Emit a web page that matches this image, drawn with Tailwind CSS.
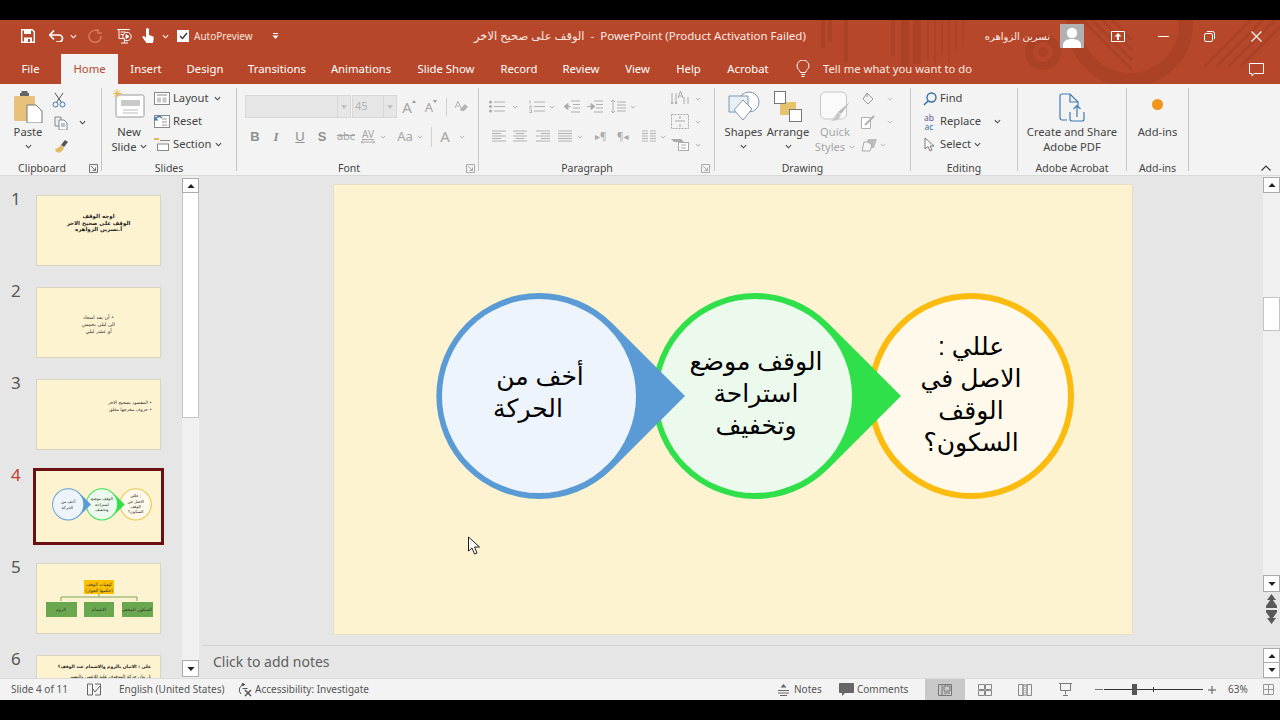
<!DOCTYPE html>
<html lang="en">
<head>
<meta charset="UTF-8">
<title>PowerPoint</title>
<script src="https://cdn.jsdelivr.net/npm/@tailwindcss/browser@4"></script>
</head>
<body class="bg-black overflow-hidden">
<svg class="hidden">
  <symbol id="chev" viewBox="0 0 8 5"><path d="M1 1l3 3 3-3" fill="none" stroke="currentColor" stroke-width="1.2"/></symbol>
  <symbol id="up" viewBox="0 0 9 5"><path d="M4.5 0L9 5H0z" fill="currentColor"/></symbol>
  <symbol id="down" viewBox="0 0 9 5"><path d="M0 0h9L4.5 5z" fill="currentColor"/></symbol>
  <symbol id="launch" viewBox="0 0 9 9"><path d="M.5.5h8v8h-8z" fill="none" stroke="currentColor"/><path d="M2 2l4.5 4.5M6.5 3.5v3h-3" fill="none" stroke="currentColor"/></symbol>
</svg>
<div class="w-[1280px] h-[720px] flex flex-col text-[#444] font-['Noto_Sans','DejaVu_Sans',sans-serif] relative overflow-hidden">
  <div class="h-[20px] bg-black shrink-0"></div>

  <!-- title + tabs -->
  <div class="relative h-[64px] bg-[#b7472a] shrink-0 text-white text-[11.5px]">
    <svg class="absolute inset-0" width="1280" height="64" viewBox="0 20 1280 64" fill="none" stroke="#ab4225">
      <path d="M823 20v28M830 20v22M846 20v42M893 20v36" stroke-width="4"/>
      <path d="M905 20v46M917 20v44" stroke-width="8"/>
      <path d="M928 20v40M935 20v44M942 20v34M949 20v42M956 20v30M963 20v24" stroke-width="1.500"/>
      <circle cx="1043" cy="52" r="14" stroke-width="8"/>
      <circle cx="1043" cy="52" r="5" fill="#ab4225" stroke="none"/>
      <circle cx="1130" cy="24" r="56" stroke-width="14"/>
      <path d="M1082 20l50 50M1092 20l40 40M1102 20l30 30M1112 20l20 20" stroke-width="3"/>
      <path d="M1205 66l46-46M1217 66l46-46M1229 66l46-46M1241 66l39-39" stroke-width="3"/>
    </svg>
    <div class="relative flex items-center h-[32px]">
      <div class="w-[474px] flex items-center shrink-0">
        <div class="w-[49px] flex justify-center pl-[7px]">
          <svg width="14" height="14" viewBox="0 0 14 14"><path d="M.7.7h10.5l2.1 2.1v10.5H.7z" fill="none" stroke="#fff" stroke-width="1.4"/><path d="M3 1v4h7V1zM3 13V8.500h8V13z" fill="#fff"/><path d="M7 10h2v3H7z" fill="#b7472a"/></svg>
        </div>
        <svg width="15" height="12" viewBox="0 0 15 12"><path d="M1 5h9a3.500 3.500 0 010 7H7" fill="none" stroke="#fff" stroke-width="1.700"/><path d="M5 .5L.8 5 5 9.500" fill="none" stroke="#fff" stroke-width="1.700"/></svg>
        <svg class="w-[7px] h-[5px] ml-[6px] text-white"><use href="#chev"/></svg>
        <svg class="ml-[11px]" width="14" height="14" viewBox="0 0 14 14"><path d="M10.500 2.500A6 6 0 1 0 13 7M10 0v4h4" fill="none" stroke="#d77a5d" stroke-width="1.500"/></svg>
        <svg class="ml-[14px]" width="17" height="16" viewBox="0 0 17 16" fill="none" stroke="#fff"><path d="M1 1.500h13M3 1.500v9h4M8.500 10.500v4M5 15h7M4.500 4h5M4.500 6.500h3"/><circle cx="11" cy="8.500" r="4.200"/><path d="M10 6.500v4l3-2z" fill="#fff"/></svg>
        <svg class="ml-[8px]" width="13" height="16" viewBox="0 0 13 16"><path d="M5 1.500a1.500 1.500 0 013 0V7l3.500 1.200c1 .4 1.300 1 1.200 2L12 15H5.500L1.500 9.500c-.5-1 .8-2 1.800-1.200L5 10z" fill="#fff"/></svg>
        <svg class="w-[7px] h-[5px] ml-[8px] text-white"><use href="#chev"/></svg>
        <div class="ml-[8px] w-[12px] h-[12px] bg-white flex items-center justify-center">
          <svg width="9" height="8" viewBox="0 0 9 8"><path d="M1 4l2.500 2.500L8 1" fill="none" stroke="#333" stroke-width="1.300"/></svg>
        </div>
        <span class="ml-[5px] whitespace-nowrap text-[10px] text-[#f6e2da]">AutoPreview</span>
        <svg class="ml-[19px]" width="7" height="7" viewBox="0 0 7 7"><path d="M1 .5h5" stroke="#fff"/><path d="M.5 2.500h6L3.500 6z" fill="#fff"/></svg>
      </div>
      <div class="w-[333px] whitespace-nowrap shrink-0 text-[11.500px] text-[#fbe9e2]">الوقف على صحيح الاخر &nbsp;-&nbsp; PowerPoint (Product Activation Failed)</div>
      <div class="w-[243px] shrink-0 text-right whitespace-nowrap text-[10px] text-[#fbe9e2]" dir="rtl">نسرين الزواهره</div>
      <div class="ml-[10px] w-[24px] h-[24px] bg-[#b1b1b1] shrink-0 overflow-hidden">
        <svg width="24" height="24" viewBox="0 0 24 24"><circle cx="12" cy="9" r="5.200" fill="#fff"/><path d="M3 24v-3c0-4 4-6 9-6s9 2 9 6v3z" fill="#fff"/></svg>
      </div>
      <svg class="ml-[27px]" width="14" height="11" viewBox="0 0 14 11"><path d="M.5.5h13v10H.5z" fill="none" stroke="#fff"/><path d="M7 2l3.500 3.500H8V9H6V5.500H3.500z" fill="#fff"/></svg>
      <svg class="ml-[33px]" width="11" height="1" viewBox="0 0 11 1"><path d="M0 .5h11" stroke="#fff"/></svg>
      <svg class="ml-[35px]" width="11" height="11" viewBox="0 0 11 11" fill="none" stroke="#fff"><rect x=".5" y="2.500" width="8" height="8" rx="1.500"/><path d="M3 .5h5.500a2 2 0 012 2V8"/></svg>
      <svg class="ml-[36px]" width="11" height="11" viewBox="0 0 11 11"><path d="M.5.5l10 10M10.500.5l-10 10" stroke="#fff" stroke-width="1.100"/></svg>
    </div>
    <div class="relative flex items-end h-[32px] text-[11.300px]">
      <div class="w-[61px] h-[30px] leading-[30px] text-center">File</div>
      <div class="w-[57px] h-[30px] leading-[30px] text-center bg-[#f3f3f3] text-[#b7472a]">Home</div>
      <div class="w-[56px] h-[30px] leading-[30px] text-center">Insert</div>
      <div class="w-[62px] h-[30px] leading-[30px] text-center">Design</div>
      <div class="w-[82px] h-[30px] leading-[30px] text-center">Transitions</div>
      <div class="w-[86px] h-[30px] leading-[30px] text-center">Animations</div>
      <div class="w-[84px] h-[30px] leading-[30px] text-center">Slide Show</div>
      <div class="w-[62px] h-[30px] leading-[30px] text-center">Record</div>
      <div class="w-[62px] h-[30px] leading-[30px] text-center">Review</div>
      <div class="w-[51px] h-[30px] leading-[30px] text-center">View</div>
      <div class="w-[51px] h-[30px] leading-[30px] text-center">Help</div>
      <div class="w-[68px] h-[30px] leading-[30px] text-center">Acrobat</div>
      <div class="w-[28px] h-[30px] flex items-center justify-end">
        <svg width="14" height="18" viewBox="0 0 14 18" fill="none" stroke="#fff"><path d="M4.500 12.500C4 10 1 9 1 6a6 6 0 0112 0c0 3-3 4-3.500 6.500zM5 14.500h4M5.500 16.500h3"/></svg>
      </div>
      <div class="ml-[13px] h-[30px] leading-[30px] whitespace-nowrap text-[#fbe9e2]">Tell me what you want to do</div>
      <div class="flex-1 flex justify-end pr-[16px] pb-[7px]">
        <svg width="15" height="14" viewBox="0 0 15 14"><path d="M.5.500h14v10H5l-2 2.500v-2.500H.5z" fill="none" stroke="#fff"/></svg>
      </div>
    </div>
  </div>

  <!-- ribbon -->
  <div class="relative h-[92px] bg-[#f3f3f3] border-b border-[#d9d9d9] flex pt-[4px] text-[11.200px] text-[#444] shrink-0 items-start">

    <!-- clipboard -->
    <div class="w-[102px] h-[83px] border-r border-[#c6c6c6] shrink-0">
      <div class="h-[73px] flex">
        <div class="w-[56px] flex flex-col items-center">
          <div class="h-[36px] pt-[3px] flex items-start">
            <svg width="30" height="32" viewBox="0 0 30 32"><rect x="1" y="5" width="21" height="25" rx="1.500" fill="#e8c17a"/><path d="M7 5h9V2h-9z" fill="#666"/><rect x="8.500" y="0" width="6" height="4" fill="#666"/><path d="M14 14h9l6 6v12H14z" fill="#fff" stroke="#777"/></svg>
          </div>
          <div class="leading-[15px]">Paste</div>
          <svg class="w-[7px] h-[5px] mt-[5px] text-[#444]"><use href="#chev"/></svg>
        </div>
        <div class="flex flex-col items-start w-[40px]">
          <div class="h-[23px] flex items-center">
            <svg class="ml-[-4px]" width="14" height="16" viewBox="0 0 14 16" fill="none" stroke="#4a7aa8"><path d="M3 1l6.500 9.500M11 1L4.500 10.500" stroke="#555"/><circle cx="3.500" cy="12.500" r="2.500"/><circle cx="10.500" cy="12.500" r="2.500"/></svg>
          </div>
          <div class="h-[23px] flex items-center">
            <svg class="ml-[-2px]" width="14" height="14" viewBox="0 0 14 14" fill="none" stroke="#888"><path d="M1 1h6v9H1z" fill="#eee"/><path d="M5 4h5l3 3v7H5z" fill="#fff"/><path d="M7 8h4M7 10h4" stroke="#5f87ad"/></svg>
            <svg class="w-[7px] h-[5px] ml-[11px] text-[#444]"><use href="#chev"/></svg>
          </div>
          <div class="h-[23px] flex items-center">
            <svg class="ml-[-2px]" width="15" height="14" viewBox="0 0 15 14"><path d="M7 6l4-5 3 2-4 5z" fill="#555"/><path d="M1 10c3 0 5-3 6-4l3 3c-1 2-3 4-5 5l-1-1-1 .500-1-1z" fill="#e3b863"/></svg>
          </div>
        </div>
      </div>
      <div class="h-[14px] leading-[14px] flex text-[10.500px]">
        <div class="w-[84px] text-center">Clipboard</div>
        <svg class="ml-[5px] w-[9px] h-[9px] mt-[3px] text-[#777]"><use href="#launch"/></svg>
      </div>
    </div>

    <!-- slides -->
    <div class="w-[135px] h-[83px] border-r border-[#c6c6c6] shrink-0">
      <div class="h-[73px] flex">
        <div class="w-[50px] flex flex-col items-center pl-[4px]">
          <div class="h-[36px] pt-[1px]">
            <svg width="32" height="30" viewBox="0 0 32 30"><rect x="3" y="6" width="28" height="22" rx="1.500" fill="#fff" stroke="#999"/><path d="M8 11h19v6H8z" fill="#c9c9c9"/><path d="M10 21h15M10 24h15" stroke="#bbb"/><path d="M4 0v9M0 4.500h9M1 1.500l6 6M7 1.500l-6 6" stroke="#e7b94a"/></svg>
          </div>
          <div class="leading-[15px]">New</div>
          <div class="leading-[15px] flex items-center whitespace-nowrap">Slide<svg class="w-[7px] h-[5px] ml-[3px] text-[#444]"><use href="#chev"/></svg></div>
        </div>
        <div class="flex flex-col -mt-[1px] pl-[2px]">
          <div class="h-[23px] flex items-center">
            <svg width="16" height="13" viewBox="0 0 16 13" fill="none"><rect x=".5" y=".5" width="15" height="12" fill="#fff" stroke="#888"/><path d="M3 3h10" stroke="#888"/><path d="M3 5.500h4v5H3zM8.500 5.500h4v5h-4z" fill="#c9c9c9"/></svg>
            <span class="ml-[3px]">Layout</span><svg class="w-[7px] h-[5px] ml-[5px] text-[#444]"><use href="#chev"/></svg>
          </div>
          <div class="h-[23px] flex items-center">
            <svg width="16" height="13" viewBox="0 0 16 13" fill="none"><rect x=".5" y=".5" width="15" height="12" fill="#fff" stroke="#888"/><path d="M8 4h5M8 7h5M8 10h5" stroke="#999"/><path d="M1 5a4 4 0 017-2" stroke="#3f77ae" stroke-width="1.500"/><path d="M.5 1.500v4h4z" fill="#3f77ae"/></svg>
            <span class="ml-[3px]">Reset</span>
          </div>
          <div class="h-[23px] flex items-center">
            <svg width="16" height="13" viewBox="0 0 16 13" fill="none"><path d="M0 1h5" stroke="#e7b94a" stroke-width="2"/><path d="M6 2.500h10" stroke="#888"/><rect x="3.500" y="6" width="11" height="6.500" fill="#fff" stroke="#888"/></svg>
            <span class="ml-[3px]">Section</span><svg class="w-[7px] h-[5px] ml-[4px] text-[#444]"><use href="#chev"/></svg>
          </div>
        </div>
      </div>
      <div class="h-[14px] leading-[14px] text-center text-[10.500px]">Slides</div>
    </div>

    <!-- font -->
    <div class="w-[242px] h-[83px] border-r border-[#c6c6c6] shrink-0 text-[#a6a6a6]">
      <div class="h-[73px] pt-[7px] pl-[8px]">
        <div class="flex h-[23px] items-center">
          <div class="w-[106px] h-[23px] bg-[#e6e6e6] border border-[#d8d8d8] flex justify-end shrink-0">
            <div class="w-[13px] h-full border-l border-[#d8d8d8] flex items-center justify-center"><svg class="w-[6px] h-[4px] text-[#bbb]"><use href="#down"/></svg></div>
          </div>
          <div class="ml-[1px] w-[45px] h-[23px] bg-[#e6e6e6] border border-[#d8d8d8] flex justify-between items-center pl-[2px] text-[11px] text-[#b0b0b0] shrink-0">45
            <div class="w-[13px] h-full border-l border-[#d8d8d8] flex items-center justify-center"><svg class="w-[6px] h-[4px] text-[#bbb]"><use href="#down"/></svg></div>
          </div>
          <div class="w-[24px] text-center text-[15px] leading-[20px] whitespace-nowrap">A<svg class="inline align-top mt-[3px]" width="4" height="3" viewBox="0 0 4 3"><path d="M2 0l2 3H0z" fill="#999"/></svg></div>
          <div class="w-[20px] text-center text-[13px] leading-[20px] whitespace-nowrap">A<svg class="inline align-top mt-[3px]" width="4" height="3" viewBox="0 0 4 3"><path d="M0 0h4L2 3z" fill="#999"/></svg></div>
          <div class="w-[10px] flex justify-center"><div class="w-px h-[18px] bg-[#d0d0d0]"></div></div>
          <div class="w-[20px] flex justify-center">
            <svg width="14" height="14" viewBox="0 0 14 14"><path d="M6 9l5-5 3 3-4 4H7z" fill="#b5b5b5"/><path d="M1 8l3-7 3 7M2.500 6h3" fill="none" stroke="#b5b5b5"/></svg>
          </div>
        </div>
        <div class="flex h-[23px] items-center mt-[7px]">
          <div class="w-[20px] text-center text-[13px] font-bold font-['Liberation_Sans',sans-serif] text-[#909090]">B</div>
          <div class="w-[22px] text-center text-[13px] italic font-['Liberation_Serif',serif] text-[#909090] font-bold">I</div>
          <div class="w-[26px] text-center text-[13px] underline font-['Liberation_Sans',sans-serif] text-[#909090]">U</div>
          <div class="w-[18px] text-center text-[13px] font-bold font-['Liberation_Sans',sans-serif] text-[#909090]">S</div>
          <div class="w-[30px] text-center text-[11px] line-through">abc</div>
          <div class="w-[14px] flex flex-col items-center">
            <div class="text-[10px] leading-[11px] underline">AV</div>
            <svg width="14" height="4" viewBox="0 0 14 4"><path d="M0 2h14M2 .5L.5 2 2 3.500M12 .5L13.500 2 12 3.500" fill="none" stroke="#aaa"/></svg>
          </div>
          <div class="w-[16px] flex justify-center"><svg class="w-[6px] h-[4px] text-[#aaa]"><use href="#chev"/></svg></div>
          <div class="ml-[4px] w-[20px] text-center text-[13px]">Aa</div>
          <div class="w-[10px] flex justify-center"><svg class="w-[6px] h-[4px] text-[#aaa]"><use href="#chev"/></svg></div>
          <div class="w-[12px] flex justify-center"><div class="w-px h-[20px] bg-[#d0d0d0]"></div></div>
          <div class="w-[16px] text-center text-[15px]">A</div>
          <div class="w-[18px] flex justify-center"><svg class="w-[6px] h-[4px] text-[#aaa]"><use href="#chev"/></svg></div>
        </div>
      </div>
      <div class="h-[14px] leading-[14px] flex text-[10.500px] text-[#444]">
        <div class="w-[224px] text-center">Font</div>
        <svg class="ml-[5px] w-[9px] h-[9px] mt-[3px] text-[#aaa]"><use href="#launch"/></svg>
      </div>
    </div>

    <!-- paragraph -->
    <div class="w-[236px] h-[83px] border-r border-[#c6c6c6] shrink-0 text-[#aaa]">
      <div class="h-[73px] flex">
        <div class="w-[192px] pl-[10px] pt-[7px]">
          <div class="flex h-[23px] items-center">
            <svg width="16" height="13" viewBox="0 0 16 13" stroke="#b0b0b0"><path d="M5 2h11M5 6.500h11M5 11h11"/><circle cx="1.500" cy="2" r="1.500" fill="#aaa" stroke="none"/><circle cx="1.500" cy="6.500" r="1.500" fill="#aaa" stroke="none"/><circle cx="1.500" cy="11" r="1.500" fill="#aaa" stroke="none"/></svg>
            <svg class="w-[6px] h-[4px] ml-[7px]"><use href="#chev"/></svg>
            <svg class="ml-[11px]" width="16" height="13" viewBox="0 0 16 13" stroke="#b0b0b0"><path d="M5 2h11M5 6.500h11M5 11h11M1 .5v3M.5 6h2l-2 2h2M.5 10h2v2.500h-2" fill="none"/></svg>
            <svg class="w-[6px] h-[4px] ml-[4px]"><use href="#chev"/></svg>
            <svg class="ml-[9px]" width="16" height="13" viewBox="0 0 16 13" stroke="#b0b0b0"><path d="M7 1h9M9 4.500h7M9 8h7M7 12h9M1 6.500h6" /><path d="M0 6.500l4-3v6z" fill="#aaa"/></svg>
            <svg class="ml-[7px]" width="16" height="13" viewBox="0 0 16 13" stroke="#b0b0b0"><path d="M7 1h9M9 4.500h7M9 8h7M7 12h9M0 6.500h5"/><path d="M8 6.500l-4-3v6z" fill="#aaa"/></svg>
            <svg class="ml-[7px]" width="16" height="15" viewBox="0 0 16 15" stroke="#b0b0b0" fill="none"><path d="M7 3h9M7 6h9M7 9h9M7 12h9M3 1v13M1 3l2-2 2 2M1 12l2 2 2-2"/></svg>
            <svg class="w-[6px] h-[4px] ml-[4px]"><use href="#chev"/></svg>
          </div>
          <div class="flex h-[23px] items-center mt-[7px] ml-[3px]">
            <svg width="14" height="13" viewBox="0 0 14 13" stroke="#b0b0b0"><path d="M0 1h14M0 3.500h9M0 6h14M0 8.500h9M0 11h14"/></svg>
            <svg class="ml-[7px]" width="14" height="13" viewBox="0 0 14 13" stroke="#b0b0b0"><path d="M0 1h14M2.500 3.500h9M0 6h14M2.500 8.500h9M0 11h14"/></svg>
            <svg class="ml-[9px]" width="14" height="13" viewBox="0 0 14 13" stroke="#b0b0b0"><path d="M0 1h14M5 3.500h9M0 6h14M5 8.500h9M0 11h14"/></svg>
            <svg class="ml-[8px]" width="14" height="13" viewBox="0 0 14 13" stroke="#b0b0b0"><path d="M0 1h14M0 3.500h14M0 6h14M0 8.500h14M0 11h14"/></svg>
            <svg class="w-[6px] h-[4px] ml-[5px]"><use href="#chev"/></svg>
            <span class="ml-[12px] text-[10px] leading-[13px] whitespace-nowrap w-[14px]">▸¶</span>
            <span class="ml-[8px] text-[10px] leading-[13px] whitespace-nowrap w-[14px]">¶◂</span>
            <svg class="ml-[11px]" width="14" height="13" viewBox="0 0 14 13" stroke="#b0b0b0"><path d="M0 1h6M0 3.500h6M0 6h6M0 8.500h6M0 11h6M8 1h6M8 3.500h6M8 6h6M8 8.500h6M8 11h6"/></svg>
            <svg class="w-[6px] h-[4px] ml-[4px]"><use href="#chev"/></svg>
          </div>
        </div>
        <div class="flex flex-col -mt-[1px]">
          <div class="h-[23px] flex items-center">
            <svg width="18" height="17" viewBox="0 0 18 17" stroke="#aaa" fill="none"><path d="M1 3v11M5 3v11M13 7v7M17 7v7M0 12l1 2 1-2M4 12l1 2 1-2"/><path d="M7 8l2.500-7L12 8M8 6h3"/></svg>
            <svg class="w-[6px] h-[4px] ml-[6px]"><use href="#chev"/></svg>
          </div>
          <div class="h-[23px] flex items-center">
            <svg width="18" height="15" viewBox="0 0 18 15" stroke="#aaa" fill="none" stroke-dasharray="2 1"><path d="M.5.5h17v14H.5z"/><path d="M4 7h10" stroke-dasharray="none"/><path d="M9 2v3M9 10v3" stroke-dasharray="none"/></svg>
            <svg class="w-[6px] h-[4px] ml-[6px]"><use href="#chev"/></svg>
          </div>
          <div class="h-[23px] flex items-center">
            <svg width="18" height="15" viewBox="0 0 18 15"><path d="M0 2h10l3 3H3z" fill="#aaa"/><rect x="7.500" y="5.500" width="10" height="8" fill="#fff" stroke="#aaa"/><path d="M10 8h5M10 11h5" stroke="#aaa"/></svg>
            <svg class="w-[6px] h-[4px] ml-[6px]"><use href="#chev"/></svg>
          </div>
        </div>
      </div>
      <div class="h-[14px] leading-[14px] flex text-[10.500px] text-[#444]">
        <div class="w-[216px] text-center">Paragraph</div>
        <svg class="ml-[6px] w-[9px] h-[9px] mt-[3px] text-[#aaa]"><use href="#launch"/></svg>
      </div>
    </div>

    <!-- drawing -->
    <div class="w-[196px] h-[83px] border-r border-[#c6c6c6] shrink-0">
      <div class="h-[73px] flex pl-[7px]">
        <div class="w-[43px] flex flex-col items-center">
          <div class="h-[36px] pt-[3px]">
            <svg width="32" height="32" viewBox="0 0 32 32" fill="#fff" stroke="#7f97ad"><circle cx="21" cy="11" r="10"/><path d="M1 5h19v16H1z" fill="#e8eff5"/><path d="M15 9l9 9-9 11-9-10z" fill="#fff"/></svg>
          </div>
          <div class="leading-[15px]">Shapes</div>
          <svg class="w-[7px] h-[5px] mt-[5px] text-[#444]"><use href="#chev"/></svg>
        </div>
        <div class="w-[46px] flex flex-col items-center">
          <div class="h-[36px] pt-[3px]">
            <svg width="28" height="31" viewBox="0 0 28 31"><rect x="6" y="11" width="16" height="13" fill="#e5c36e"/><rect x=".5" y=".5" width="11" height="12" fill="#fff" stroke="#777"/><rect x="15.500" y="18.500" width="12" height="12" fill="#fff" stroke="#777"/></svg>
          </div>
          <div class="leading-[15px]">Arrange</div>
          <svg class="w-[7px] h-[5px] mt-[5px] text-[#444]"><use href="#chev"/></svg>
        </div>
        <div class="w-[48px] flex flex-col items-center text-[#a6a6a6]">
          <div class="h-[36px] pt-[3px]">
            <svg width="31" height="32" viewBox="0 0 31 32"><rect x=".5" y="1" width="26" height="27" rx="5" fill="#fafafa" stroke="#c8c8c8"/><path d="M30 11L21 23l-3-2z" fill="#b8b8b8"/><path d="M18 21l3 3-3 5-7 1c3-2 4-6 7-9z" fill="#c8c8c8"/></svg>
          </div>
          <div class="leading-[15px]">Quick</div>
          <div class="leading-[15px] flex items-center">Styles<svg class="w-[6px] h-[4px] ml-[4px]"><use href="#chev"/></svg></div>
        </div>
        <div class="flex flex-col pl-[2px] -mt-[1px] text-[#b5b5b5]">
          <div class="h-[23px] flex items-center">
            <svg width="14" height="14" viewBox="0 0 14 14" fill="none" stroke="#999"><path d="M6 1l6 6-5 5-5-5z" fill="#f2f2f2"/><path d="M6 1v4"/></svg>
            <svg class="w-[6px] h-[4px] ml-[12px]"><use href="#chev"/></svg>
          </div>
          <div class="h-[23px] flex items-center">
            <svg width="14" height="14" viewBox="0 0 14 14" fill="none" stroke="#b0b0b0"><path d="M.5 2.500h9v11h-9z" fill="#fff"/><path d="M4 10l9-9" stroke-width="2"/></svg>
            <svg class="w-[6px] h-[4px] ml-[12px]"><use href="#chev"/></svg>
          </div>
          <div class="h-[23px] flex items-center">
            <svg width="16" height="14" viewBox="0 0 16 14"><path d="M7 1h9l-3 9H3z" fill="#bdbdbd"/><path d="M3 4h4l4 3-2 6H1z" fill="#f5f5f5" stroke="#a8a8a8"/></svg>
            <svg class="w-[6px] h-[4px] ml-[3px]"><use href="#chev"/></svg>
          </div>
        </div>
      </div>
      <div class="h-[14px] leading-[14px] text-center text-[10.500px] pr-[20px]">Drawing</div>
    </div>

    <!-- editing -->
    <div class="w-[107px] h-[83px] border-r border-[#c6c6c6] shrink-0">
      <div class="h-[73px] flex flex-col pl-[10px] -mt-[1px]">
        <div class="h-[23px] flex items-center">
          <svg class="ml-[2px]" width="14" height="14" viewBox="0 0 14 14" fill="none" stroke="#2f6ea8" stroke-width="1.400"><circle cx="8.500" cy="5.500" r="4.500"/><path d="M5 9l-4 4"/></svg>
          <span class="ml-[3px]">Find</span>
        </div>
        <div class="h-[23px] flex items-center">
          <div class="w-[16px] flex flex-col items-center text-[8.500px] leading-[9px]">
            <span class="text-[#6e5a9b]">ab</span><span class="text-[#3b6ea5]">ac</span>
          </div>
          <span class="ml-[3px]">Replace</span>
          <svg class="w-[7px] h-[5px] ml-[13px] text-[#444]"><use href="#chev"/></svg>
        </div>
        <div class="h-[23px] flex items-center">
          <svg class="ml-[3px]" width="11" height="15" viewBox="0 0 11 15"><path d="M1 1v11l3-2.500 2 4.500 2-1-2-4h4z" fill="#fff" stroke="#777"/></svg>
          <span class="ml-[5px]">Select</span>
          <svg class="w-[7px] h-[5px] ml-[3px] text-[#444]"><use href="#chev"/></svg>
        </div>
      </div>
      <div class="h-[14px] leading-[14px] text-center text-[10.500px] mt-[1px]">Editing</div>
    </div>

    <!-- acrobat -->
    <div class="w-[109px] h-[83px] border-r border-[#c6c6c6] shrink-0">
      <div class="h-[73px] flex flex-col items-center">
        <div class="h-[36px] pt-[5px]">
          <svg width="26" height="30" viewBox="0 0 26 30" fill="none" stroke="#3f7cb5" stroke-width="1.200"><path d="M8 27H3a2 2 0 01-2-2V3a2 2 0 012-2h8l8 8v5M11 1v8h8"/><path d="M11 19v7a2 2 0 002 2h10a2 2 0 002-2v-7M18 24V13M14.500 16l3.500-3.500 3.500 3.500"/></svg>
        </div>
        <div class="leading-[15px] whitespace-nowrap">Create and Share</div>
        <div class="leading-[15px] whitespace-nowrap">Adobe PDF</div>
      </div>
      <div class="h-[14px] leading-[14px] text-center text-[10.500px]">Adobe Acrobat</div>
    </div>

    <!-- add-ins -->
    <div class="w-[62px] h-[83px] border-r border-[#c6c6c6] shrink-0">
      <div class="h-[73px] flex flex-col items-center">
        <div class="h-[36px] pt-[11px]"><div class="w-[11px] h-[11px] rounded-full bg-[#f3941c]"></div></div>
        <div class="leading-[15px]">Add-ins</div>
      </div>
      <div class="h-[14px] leading-[14px] text-center text-[10.500px]">Add-ins</div>
    </div>

    <div class="flex-1 h-[87px] flex justify-end items-end pr-[9px] pb-[4px]">
      <svg width="10" height="6" viewBox="0 0 10 6"><path d="M.5 5.500L5 1l4.500 4.500" fill="none" stroke="#333" stroke-width="1.100"/></svg>
    </div>
  </div>

  <!-- main -->
  <div class="flex-1 flex bg-[#e6e6e6] min-h-0">

    <!-- thumbnails -->
    <div class="w-[200px] shrink-0 flex relative overflow-hidden">
      <div class="w-[182px] shrink-0 pt-[19px] text-[#555]">
        <div class="flex h-[92px]">
          <div class="w-[36px] pl-[11px] text-[17px] leading-[8px]">1</div>
          <div class="w-[125px] h-[71px] bg-[#fdf3d0] border border-[#d8d4c4] flex flex-col items-center pt-[17px] text-[5.500px] leading-[6.500px] font-bold text-[#222] font-['DejaVu_Sans',sans-serif]" dir="rtl">
            <div>اوجه الوقف</div><div>الوقف على صحيح الاخر</div><div>أ.نسرين الزواهره</div>
          </div>
        </div>
        <div class="flex h-[92px]">
          <div class="w-[36px] pl-[11px] text-[17px] leading-[8px]">2</div>
          <div class="w-[125px] h-[71px] bg-[#fdf3d0] border border-[#d8d4c4] flex flex-col items-center pt-[26px] text-[5px] leading-[7px] text-[#333] font-['DejaVu_Sans',sans-serif]" dir="rtl">
            <div>• أن يقد اسعاد</div><div>الى ليلى بخمس</div><div>أو عشر ليلي</div>
          </div>
        </div>
        <div class="flex h-[92px]">
          <div class="w-[36px] pl-[11px] text-[17px] leading-[8px]">3</div>
          <div class="w-[125px] h-[71px] bg-[#fdf3d0] border border-[#d8d4c4] flex flex-col items-start pt-[19px] pr-[8px] text-[4.500px] leading-[7px] text-[#333] font-['DejaVu_Sans',sans-serif]" dir="rtl">
            <div>• المقصود بصحيح الاخر</div><div>• حروف مخرجها مغلق</div>
          </div>
        </div>
        <div class="flex h-[92px]">
          <div class="w-[36px] pl-[11px] text-[17px] leading-[8px] text-[#c0432b]">4</div>
          <div class="w-[125px] h-[71px] bg-[#fdf3d0] outline-[3px] outline-[#6b0f14] overflow-hidden">
            <svg width="125" height="71" viewBox="0 0 800 451" font-family="DejaVu Sans" font-size="26" text-anchor="middle" fill="#222">
              <circle cx="638" cy="212" r="100" fill="#fef9ea" stroke="#e8c54a" stroke-width="7"/>
              <path d="M495 139L568 212 495 285A103 103 0 1 1 495 139Z" fill="#2fe04a"/><circle cx="422" cy="212" r="97" fill="#ebfaec"/>
              <path d="M279 139L352 212 279 285A103 103 0 1 1 279 139Z" fill="#5b9bd5"/><circle cx="206" cy="212" r="97" fill="#eef4fb"/>
              <text x="206" y="205">أخف من</text><text x="200" y="240">الحركة</text>
              <text x="422" y="185">الوقف موضع</text><text x="422" y="220">استراحة</text><text x="422" y="255">وتخفيف</text>
              <text x="638" y="165">عللي :</text><text x="638" y="200">الاصل في</text><text x="638" y="235">الوقف</text><text x="638" y="270">السكون؟</text>
            </svg>
          </div>
        </div>
        <div class="flex h-[92px]">
          <div class="w-[36px] pl-[11px] text-[17px] leading-[8px]">5</div>
          <div class="w-[125px] h-[71px] bg-[#fdf3d0] border border-[#d8d4c4] overflow-hidden">
            <svg width="123" height="69" viewBox="0 0 123 69" font-family="DejaVu Sans" font-size="4.500" text-anchor="middle" fill="#333">
              <rect x="47" y="16" width="30" height="14" fill="#fcc000"/>
              <path d="M62 30v3M24 37v-4h76v4" fill="none" stroke="#7fa65f"/>
              <rect x="9" y="38" width="31" height="15" fill="#6aa84f"/><rect x="47" y="38" width="30" height="15" fill="#6aa84f"/><rect x="85" y="38" width="31" height="15" fill="#6aa84f"/>
              <text x="62" y="22">كيفيات الوقف</text><text x="62" y="28">(حكمها الجواز)</text>
              <text x="24" y="47">الروم</text><text x="62" y="47">الاشمام</text><text x="100" y="47">السكون المحض</text>
            </svg>
          </div>
        </div>
        <div class="flex h-[92px]">
          <div class="w-[36px] pl-[11px] text-[17px] leading-[8px]">6</div>
          <div class="w-[125px] h-[71px] bg-[#fdf3d0] border border-[#d8d4c4] pt-[6px] pr-[9px] text-[4.500px] leading-[10px] font-bold text-[#222] font-['DejaVu_Sans',sans-serif]" dir="rtl">
            <div>علي : الاتيان بالروم والاشمام عند الوقف؟</div><div class="font-normal">1. بيان حركة الموقوف عليه للاعمى والبصير</div>
          </div>
        </div>
      </div>
      <!-- thumbnail scrollbar -->
      <div class="w-[17px] h-full bg-[#f0f0f0] flex flex-col pt-[2px]">
        <div class="h-[15px] bg-white border border-[#ababab] flex items-center justify-center shrink-0"><svg class="w-[8px] h-[4px] text-[#222]"><use href="#up"/></svg></div>
        <div class="h-[225px] bg-white border-x border-b border-[#c4c4c4] shrink-0"></div>
        <div class="flex-1"></div>
        <div class="h-[17px] bg-white border border-[#ababab] flex items-center justify-center shrink-0 mb-[1px]"><svg class="w-[8px] h-[4px] text-[#222]"><use href="#down"/></svg></div>
      </div>
    </div>

    <!-- editor -->
    <div class="flex-1 flex flex-col min-w-0 pl-[3px]">
      <div class="h-[469px] flex shrink-0">
        <div class="flex-1 pl-[130px] pt-[8px] min-w-0">
          <!-- slide: circles on a free canvas -->
          <div class="relative w-[800px] h-[451px] bg-[#fdf3d0] border border-[#e6dfc4] font-['Liberation_Sans','DejaVu_Sans',sans-serif] text-black">
            <svg class="absolute -left-px -top-px" width="800" height="451" viewBox="0 0 800 451">
              <circle cx="638" cy="212" r="100" fill="#fef9ea" stroke="#fbbc0f" stroke-width="6"/>
              <path d="M495 139L568 212 495 285A103 103 0 1 1 495 139Z" fill="#2fe04a"/>
              <circle cx="422" cy="212" r="97" fill="#ebfaec"/>
              <path d="M279 139L352 212 279 285A103 103 0 1 1 279 139Z" fill="#5b9bd5"/>
              <circle cx="206" cy="212" r="97" fill="#eef4fb"/>
            </svg>
            <div class="absolute left-[106px] top-[175px] w-[200px] text-center text-[25px] leading-[32px] whitespace-nowrap" dir="rtl">
              <div>أخف من</div><div class="pr-[24px]">الحركة</div>
            </div>
            <div class="absolute left-[322px] top-[160px] w-[200px] text-center text-[25px] leading-[32px] whitespace-nowrap" dir="rtl">
              <div>الوقف موضع</div><div>استراحة</div><div>وتخفيف</div>
            </div>
            <div class="absolute left-[537px] top-[145px] w-[200px] text-center text-[25px] leading-[32px] whitespace-nowrap" dir="rtl">
              <div>عللي :</div><div>الاصل في</div><div>الوقف</div><div>السكون؟</div>
            </div>
          </div>
        </div>
        <!-- right scrollbar -->
        <div class="w-[17px] bg-[#f0f0f0] flex flex-col pt-[1px] shrink-0 h-[416px]">
          <div class="h-[16px] bg-white border border-[#ababab] flex items-center justify-center shrink-0"><svg class="w-[8px] h-[4px] text-[#222]"><use href="#up"/></svg></div>
          <div class="h-[104px] shrink-0"></div>
          <div class="h-[34px] bg-white border border-[#c4c4c4] shrink-0"></div>
          <div class="flex-1"></div>
          <div class="h-[17px] bg-white border border-[#ababab] flex items-center justify-center shrink-0"><svg class="w-[8px] h-[4px] text-[#222]"><use href="#down"/></svg></div>
          <div class="h-[34px] shrink-0 -mb-[34px] bg-[#e6e6e6] flex flex-col items-center pt-[2px] gap-[2px]">
            <svg width="11" height="14" viewBox="0 0 11 14" fill="#595959"><path d="M5.500 0L10 6H1zM5.500 4L11 12H0z"/><path d="M0 12h11v2H0z"/></svg>
            <svg width="11" height="14" viewBox="0 0 11 14" fill="#595959"><path d="M0 0h11v2H0zM0 2h11L5.500 10zM1 8h9l-4.500 6z"/></svg>
          </div>
        </div>
      </div>
      <div class="flex-1 border-t border-[#d0d0d0] flex min-h-0">
        <div class="flex-1 pl-[10px] pt-[5px] text-[14px] text-[#5f5f5f]">Click to add notes</div>
        <div class="w-[17px] pt-[2px] shrink-0 flex flex-col">
          <div class="h-[15px] bg-white border border-[#ababab] flex items-center justify-center"><svg class="w-[8px] h-[4px] text-[#222]"><use href="#up"/></svg></div>
          <div class="h-[15px] bg-white border border-[#ababab] border-t-0 flex items-center justify-center"><svg class="w-[8px] h-[4px] text-[#222]"><use href="#down"/></svg></div>
        </div>
      </div>
    </div>
  </div>

  <!-- status bar -->
  <div class="h-[22px] bg-[#f3f3f3] border-t border-[#dcdcdc] flex items-center text-[10px] text-[#555] shrink-0 whitespace-nowrap">
    <div class="ml-[11px] w-[76px]">Slide 4 of 11</div>
    <svg width="14" height="13" viewBox="0 0 14 13" fill="none" stroke="#666"><path d="M.5 1h5v11h-5zM8 1h5.500v11H8"/><path d="M6 6l2 3 5-6"/></svg>
    <div class="ml-[18px] w-[119px]">English (United States)</div>
    <svg width="14" height="14" viewBox="0 0 14 14" fill="none" stroke="#555"><path d="M7 1.500A5.500 5.500 0 003 11M4.500 5.500h5"/><circle cx="5" cy="1.500" r="1" fill="#555"/><path d="M7 7l6 6M13 7l-6 6" stroke-width="1.500"/></svg>
    <div class="ml-[3px] w-[122px]">Accessibility: Investigate</div>
    <div class="ml-[400px] flex items-center w-[62px]">
      <svg width="13" height="12" viewBox="0 0 13 12" stroke="#666" fill="none"><path d="M1 6.500h11M1 9h11M3 11.500h7"/><path d="M6.500 0l3 3.500h-6z" fill="#666" stroke="none"/></svg>
      <span class="ml-[4px]">Notes</span>
    </div>
    <div class="flex items-center w-[86px]">
      <svg width="15" height="13" viewBox="0 0 15 13"><path d="M1 0h13a1 1 0 011 1v8a1 1 0 01-1 1H6l-3 3v-3H1a1 1 0 01-1-1V1a1 1 0 011-1z" fill="#666"/></svg>
      <span class="ml-[3px]">Comments</span>
    </div>
    <div class="w-[40px] h-[21px] bg-[#c8c8c8] flex items-center justify-center">
      <svg width="14" height="12" viewBox="0 0 14 12" fill="none" stroke="#777"><path d="M.5.5h13v11H.5zM4 .5v11M6 2h6v5H6zM6 9h6"/></svg>
    </div>
    <div class="w-[40px] flex justify-center"><svg width="14" height="12" viewBox="0 0 14 12" fill="none" stroke="#888"><path d="M.5.5h6v5h-6zM7.500.5h6v5h-6zM.5 6.500h6v5h-6zM7.500 6.500h6v5h-6z"/></svg></div>
    <div class="w-[40px] flex justify-center"><svg width="14" height="12" viewBox="0 0 14 12" fill="none" stroke="#888"><path d="M.5.5h4.500v11H.5zM9 .5h4.500v11H9zM5 1h4v10H5z" /><path d="M7 2v8" stroke-dasharray="1 1"/></svg></div>
    <div class="w-[40px] flex justify-center"><svg width="13" height="13" viewBox="0 0 13 13" fill="none" stroke="#777"><path d="M0 .5h13M1.500 .5v7h10v-7M6.500 7.500v4M4 12.500h5"/></svg></div>
    <div class="ml-[10px] w-[8px] h-px bg-[#777]"></div>
    <div class="ml-[1px] relative w-[99px] h-px bg-[#333]">
      <div class="absolute left-[28px] -top-[5px] w-[5px] h-[11px] bg-[#555]"></div>
      <div class="absolute left-[49px] -top-[2px] w-px h-[5px] bg-[#333]"></div>
    </div>
    <svg class="ml-[5px]" width="8" height="8" viewBox="0 0 8 8"><path d="M4 0v8M0 4h8" stroke="#555"/></svg>
    <div class="ml-[12px] w-[30px]">63%</div>
    <svg class="ml-[5px]" width="11" height="11" viewBox="0 0 11 11" fill="none" stroke="#999"><path d="M.5.5h10v10H.5zM5.500.5v10M.5 5.500h10"/></svg>
  </div>
  <div class="h-[20px] bg-black shrink-0"></div>

  <!-- mouse cursor -->
  <svg class="absolute left-[467px] top-[536px]" width="14" height="20" viewBox="0 0 14 20"><path d="M1.500 1v14l3.500-3 2.500 6 2.500-1-2.500-6h5z" fill="#fff" stroke="#222"/></svg>
</div>
</body>
</html>
